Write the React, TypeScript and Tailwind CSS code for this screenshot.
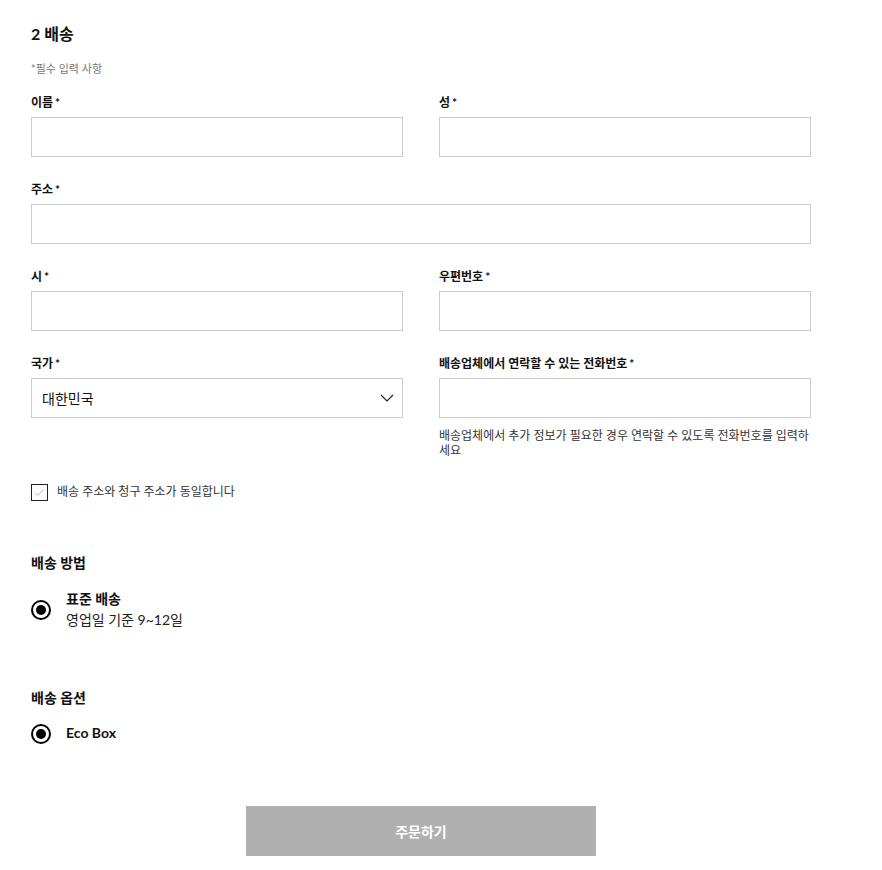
const font = "font-['Lato','Noto_Sans_CJK_KR',sans-serif]";

function Label({ children }: { children: React.ReactNode }) {
  return (
    <div className="text-[12px] leading-[16px] font-bold text-[#111] mb-[6px]">
      {children}
      <span className="ml-[2px]">*</span>
    </div>
  );
}

function Field({ label }: { label: string }) {
  return (
    <div>
      <Label>{label}</Label>
      <div className="h-[40px] border border-[#cccccc] bg-white" />
    </div>
  );
}

function Radio({ children }: { children: React.ReactNode }) {
  return (
    <div className="flex items-center">
      <div className="w-[20px] h-[20px] rounded-full border-2 border-black flex items-center justify-center shrink-0">
        <div className="w-[10px] h-[10px] rounded-full bg-black" />
      </div>
      <div className="ml-[15px]">{children}</div>
    </div>
  );
}

export default function App() {
  return (
    <div className={`${font} bg-white text-[#111] w-[882px] min-h-[870px] pl-[31px] pt-[24px]`}>
      <div className="w-[780px]">
        <h2 className="text-[16px] leading-[20px] font-bold">2 배송</h2>
        <p className="mt-[18px] text-[11px] leading-[14px] text-[#777]">*필수 입력 사항</p>

        <div className="mt-[19px] grid grid-cols-2 gap-x-[36px] gap-y-[25px]">
          <Field label="이름" />
          <Field label="성" />
          <div className="col-span-2">
            <Field label="주소" />
          </div>
          <Field label="시" />
          <Field label="우편번호" />
          <div>
            <Label>국가</Label>
            <div className="h-[40px] border border-[#cccccc] bg-white flex items-center justify-between pl-[10px] pr-[8px]">
              <span className="text-[14px]">대한민국</span>
              <svg width="14" height="8" viewBox="0 0 14 8" fill="none">
                <path d="M1 1l6 6 6-6" stroke="#222" strokeWidth="1.2" />
              </svg>
            </div>
          </div>
          <div>
            <Label>배송업체에서 연락할 수 있는 전화번호</Label>
            <div className="h-[40px] border border-[#cccccc] bg-white" />
            <p className="mt-[10px] text-[12px] leading-[15px] text-[#333]">
              배송업체에서 추가 정보가 필요한 경우 연락할 수 있도록 전화번호를 입력하세요
            </p>
          </div>
        </div>

        <label className="mt-[25px] flex items-center">
          <span className="w-[17px] h-[17px] border border-[#222] flex items-center justify-center">
            <svg width="11" height="9" viewBox="0 0 11 9" fill="none">
              <path d="M1 4.5l3 3L10 1" stroke="#bbb" strokeWidth="1" />
            </svg>
          </span>
          <span className="ml-[9px] text-[12px] text-[#333]">배송 주소와 청구 주소가 동일합니다</span>
        </label>

        <h3 className="mt-[53px] text-[14px] leading-[18px] font-bold">배송 방법</h3>
        <div className="mt-[17px]">
          <Radio>
            <div className="text-[14px] leading-[20px] font-bold">표준 배송</div>
            <div className="text-[14px] leading-[22px] text-[#222]">영업일 기준 9~12일</div>
          </Radio>
        </div>

        <h3 className="mt-[58px] text-[14px] leading-[18px] font-bold">배송 옵션</h3>
        <div className="mt-[17px]">
          <Radio>
            <div className="text-[14px] leading-[20px] font-bold -mt-[2px]">Eco Box</div>
          </Radio>
        </div>

        <div className="mt-[62px] ml-[215px] w-[350px] h-[50px] bg-[#b0b0b0] flex items-center justify-center text-white text-[14px] font-bold">
          주문하기
        </div>
      </div>
    </div>
  );
}
